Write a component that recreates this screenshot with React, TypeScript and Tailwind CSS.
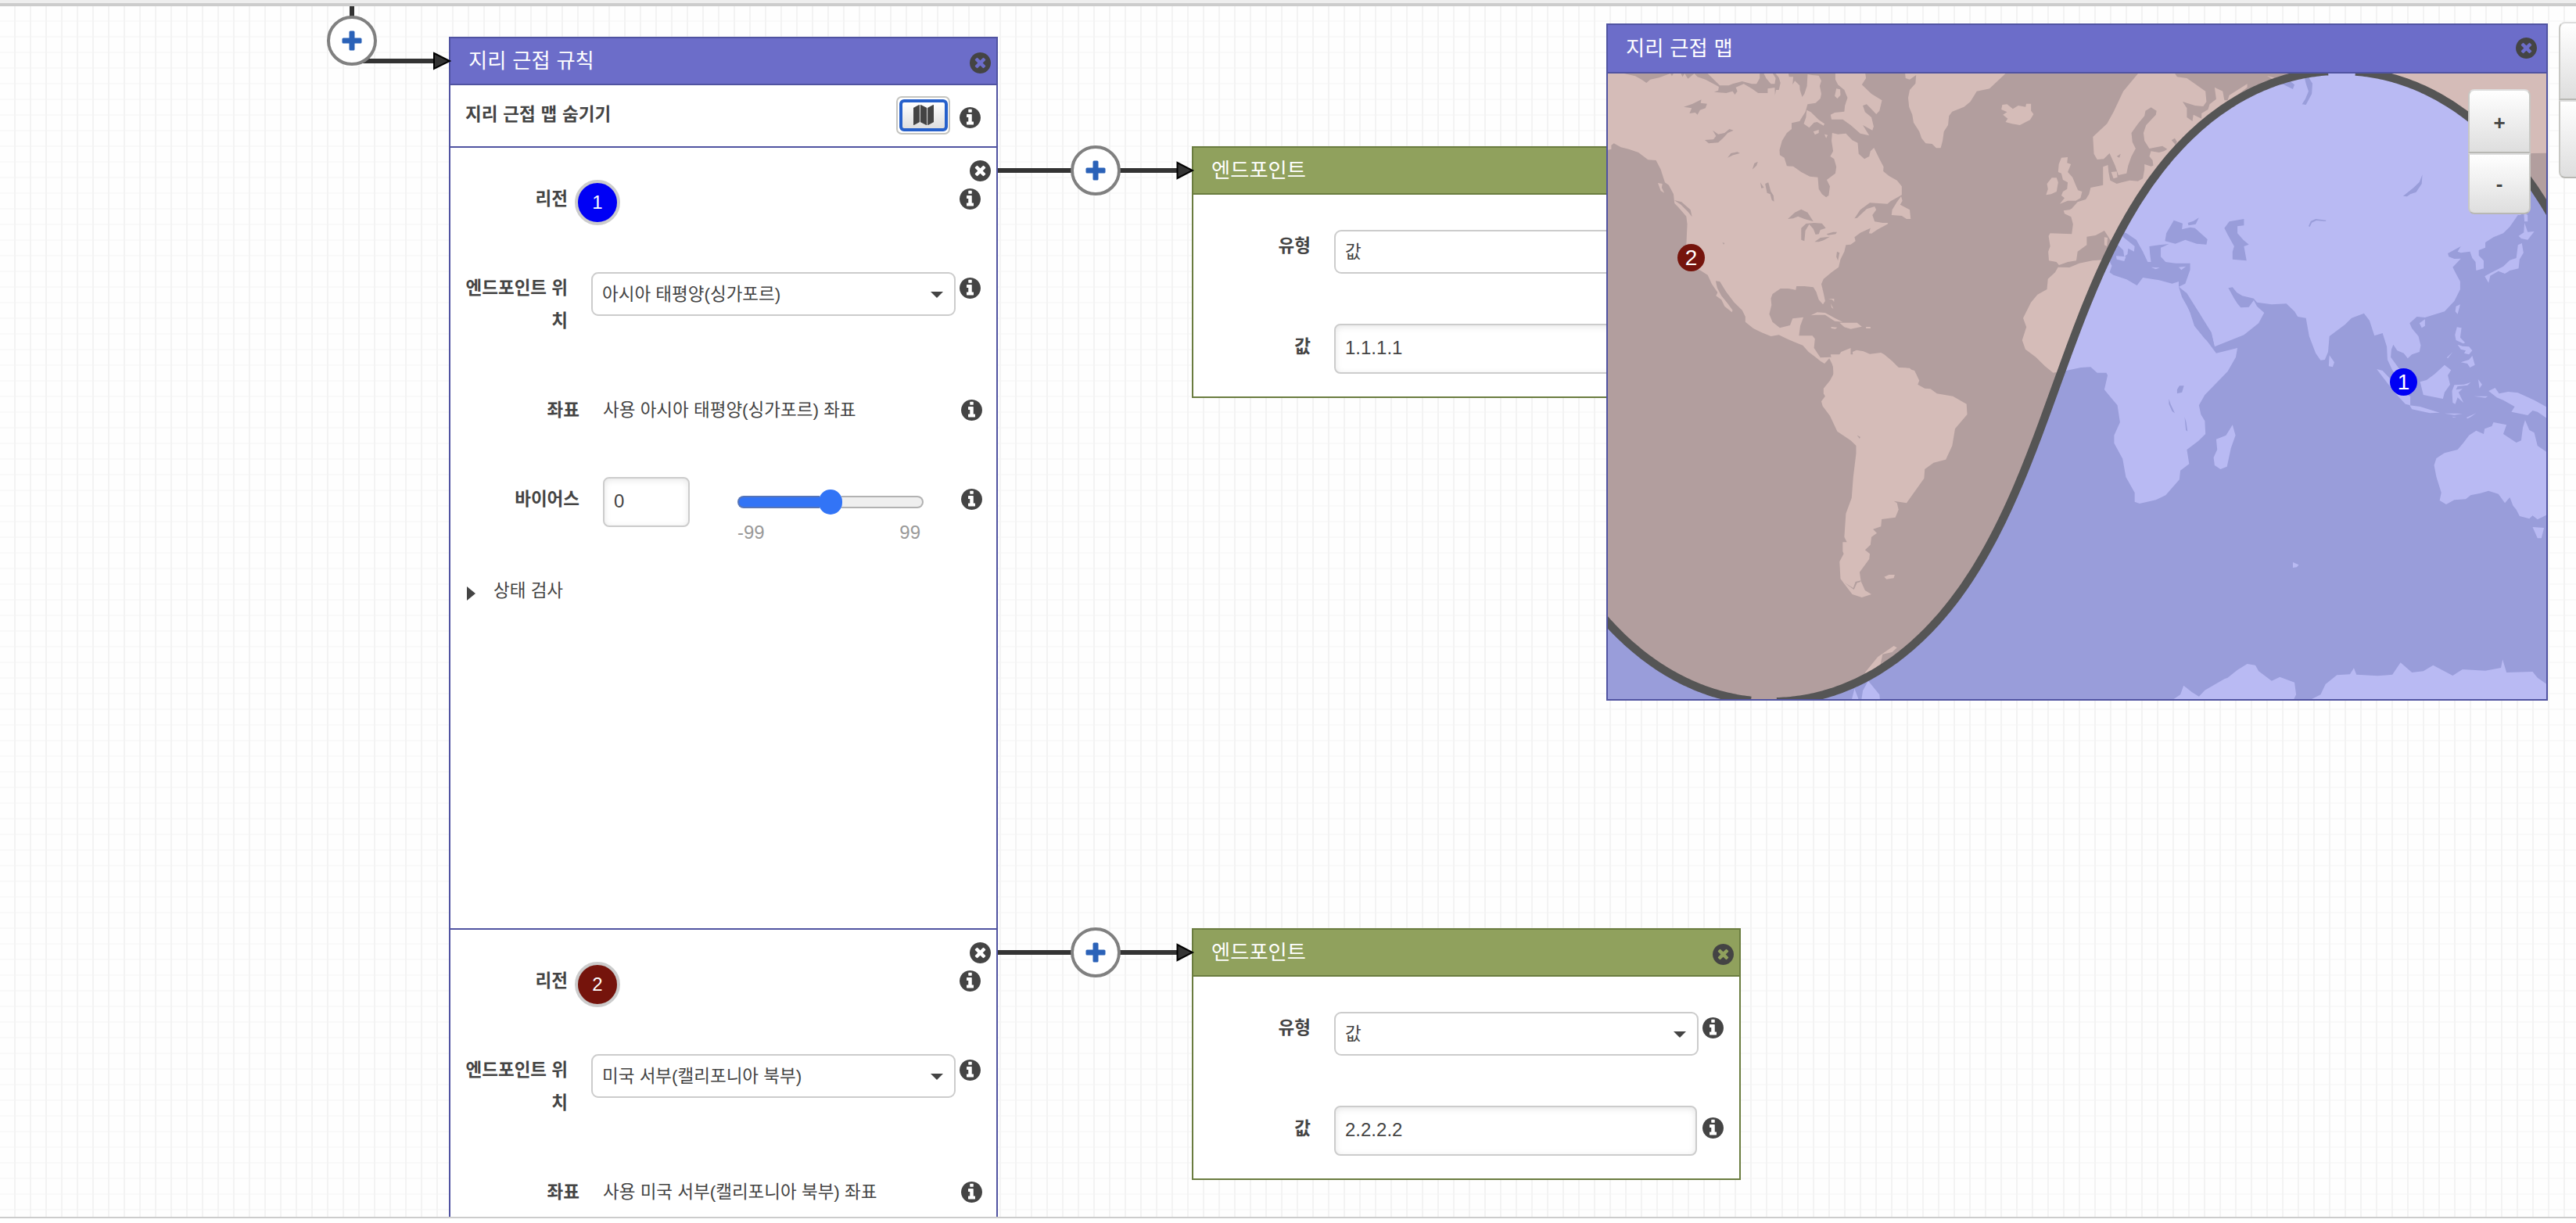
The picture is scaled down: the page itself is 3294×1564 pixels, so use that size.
import React from "react";

type Tone = "purple" | "green";

function CloseIcon() {
  return (
    <svg className="size-[27px] shrink-0 fill-[#444]" viewBox="0 128 1536 1536">
      <path d="M1149 1122q0-26-19-45L949 896l181-181q19-19 19-45 0-27-19-46l-90-90q-19-19-46-19-26 0-45 19L768 715 587 534q-19-19-45-19-27 0-46 19l-90 90q-19 19-19 46 0 26 19 45l181 181-181 181q-19 19-19 45 0 27 19 46l90 90q19 19 46 19 26 0 45-19l181-181 181 181q19 19 45 19 27 0 46-19l90-90q19-19 19-46zM1536 896q0 209-103 385.5T1153.5 1561 768 1664t-385.5-103T103 1281.5 0 896t103-385.5T382.5 231 768 128t385.5 103T1433 510.5 1536 896z" />
    </svg>
  );
}

function InfoIcon() {
  return (
    <svg className="size-[27px] shrink-0 fill-[#444]" viewBox="0 128 1536 1536">
      <path
        fillRule="evenodd"
        d="M1024 1376v-160q0-14-9-23t-23-9h-96V672q0-14-9-23t-23-9H544q-14 0-23 9t-9 23v160q0 14 9 23t23 9h96v320h-96q-14 0-23 9t-9 23v160q0 14 9 23t23 9h448q14 0 23-9t9-23zM896 480V320q0-14-9-23t-23-9H672q-14 0-23 9t-9 23v160q0 14 9 23t23 9h192q14 0 23-9t9-23zM1536 896q0 209-103 385.5T1153.5 1561 768 1664t-385.5-103T103 1281.5 0 896t103-385.5T382.5 231 768 128t385.5 103T1433 510.5 1536 896z"
      />
    </svg>
  );
}

function MapIcon() {
  return (
    <svg className="size-[26px] fill-[#444]" viewBox="0 0 1792 1792">
      <path d="M512 0q13 0 22.500 9.500T544 32v1472q0 20-17 28l-480 256q-7 4-15 4-13 0-22.500-9.500T0 1760V288q0-20 17-28L497 4q7-4 15-4zm1248 0q13 0 22.500 9.500t9.500 22.500v1472q0 20-17 28l-480 256q-7 4-15 4-13 0-22.500-9.500t-9.500-22.500V288q0-20 17-28L1745 4q7-4 15-4zM640 0q8 0 14 3l512 256q18 10 18 29v1472q0 13-9.500 22.500t-22.500 9.500q-8 0-14-3l-512-256q-18-10-18-29V32q0-13 9.500-22.500T640 0z" />
    </svg>
  );
}

function Header({ title, tone }: { title: string; tone: Tone }) {
  return (
    <div
      className={
        tone === "purple"
          ? "flex h-[60px] shrink-0 items-center justify-between border-b-2 border-[#5053a1] bg-[#6c6dc9] pr-[7px] pl-[23px]"
          : "flex h-[60px] shrink-0 items-center justify-between border-b-2 border-[#6a7c3f] bg-[#90a15d] pr-[7px] pl-[23px]"
      }
    >
      <span className="text-[26.3px] leading-[40px] text-white [word-spacing:0.5px]">{title}</span>
      <span className="mt-[4px]">
        <CloseIcon />
      </span>
    </div>
  );
}

function Select({ value }: { value: string }) {
  return (
    <div className="flex h-[56px] w-[466px] shrink-0 items-center justify-between rounded-[9px] border-2 border-[#ccc] bg-white pr-[14px] pl-[12px]">
      <span className="mt-[2px] text-[22.5px] leading-[42px]">{value}</span>
      <span className="mt-[2px] h-0 w-0 border-x-[8px] border-t-[8px] border-x-transparent border-t-[#444]" />
    </div>
  );
}

function TextBox({ value, wide }: { value: string; wide?: boolean }) {
  return (
    <div
      className={
        wide
          ? "flex h-[64px] w-[464px] shrink-0 items-center rounded-[8px] border-2 border-[#ccc] bg-white pb-[2px] pl-[12px] text-[24px] shadow-[inset_0_2px_8px_rgba(0,0,0,0.1)]"
          : "flex h-[64px] w-[111px] shrink-0 items-center rounded-[8px] border-2 border-[#ccc] bg-white pb-[2px] pl-[12px] text-[24px] shadow-[inset_0_2px_8px_rgba(0,0,0,0.1)]"
      }
    >
      {value}
    </div>
  );
}

function Label({ children }: { children: React.ReactNode }) {
  return <div className="text-right text-[22.5px] leading-[42px] font-bold">{children}</div>;
}

function BiasRow() {
  return (
    <div className="flex h-[125px] items-start pr-[18px]">
      <div className="mt-[8px] w-[165px]">
        <Label>바이어스</Label>
      </div>
      <div className="ml-[30px]">
        <TextBox value="0" />
      </div>
      <div className="mt-[16px] ml-[61px] flex w-[238px] flex-col">
        <div className="flex h-[32px] items-center">
          <div className="h-[16px] w-[105px] rounded-l-full border-2 border-r-0 border-[#5675b8] bg-[#3274f6]" />
          <div className="z-10 -mx-[1px] h-[32px] w-[30px] rounded-full bg-[#3274f6]" />
          <div className="h-[16px] flex-1 rounded-r-full border-2 border-l-0 border-[#b2b2b2] bg-[#efefef]" />
        </div>
        <div className="mt-[5px] flex justify-between pr-[4px] text-[24px] leading-[36px] text-[#999]">
          <span>-99</span>
          <span>99</span>
        </div>
      </div>
      <div className="mt-[15px] ml-auto">
        <InfoIcon />
      </div>
    </div>
  );
}

function Region({ index, place, children }: { index: 1 | 2; place: string; children?: React.ReactNode }) {
  return (
    <section className="relative h-[1000px] shrink-0 border-b-2 border-[#5053a1] pt-[41px]">
      <div className="absolute top-[16px] right-[7px]">
        <CloseIcon />
      </div>
      <div className="flex h-[118px] items-start pr-[20px]">
        <div className="mt-[4px] w-[150px]">
          <Label>리전</Label>
        </div>
        <div
          className={
            index === 1
              ? "ml-[9px] flex size-[58px] items-center justify-center rounded-full border-4 border-[#ccc] bg-[#0000f5] text-[24px] text-white"
              : "ml-[9px] flex size-[58px] items-center justify-center rounded-full border-4 border-[#ccc] bg-[#75140c] text-[24px] text-white"
          }
        >
          {index}
        </div>
        <div className="mt-[11px] ml-auto">
          <InfoIcon />
        </div>
      </div>
      <div className="flex h-[156px] items-start pr-[20px]">
        <div className="w-[150px] shrink-0">
          <Label>
            엔드포인트 위
            <br />치
          </Label>
        </div>
        <div className="ml-[30px]">
          <Select value={place} />
        </div>
        <div className="mt-[7px] ml-auto">
          <InfoIcon />
        </div>
      </div>
      <div className="flex h-[106px] items-start pr-[18px]">
        <div className="w-[165px]">
          <Label>좌표</Label>
        </div>
        <div className="ml-[30px] text-[22.5px] leading-[42px]">사용 {place} 좌표</div>
        <div className="mt-[7px] ml-auto">
          <InfoIcon />
        </div>
      </div>
      {children}
    </section>
  );
}

function Endpoint({ value }: { value: string }) {
  return (
    <div className="h-[322px] w-[702px] border-2 border-[#6a7c3f] bg-white">
      <Header title="엔드포인트" tone="green" />
      <div className="flex h-[120px] items-start pt-[45px] pr-[20px]">
        <div className="w-[150px]">
          <Label>유형</Label>
        </div>
        <div className="ml-[30px]">
          <Select value="값" />
        </div>
        <div className="mt-[7px] ml-auto">
          <InfoIcon />
        </div>
      </div>
      <div className="flex items-start pt-[45px] pr-[20px]">
        <div className="mt-[9px] w-[150px]">
          <Label>값</Label>
        </div>
        <div className="ml-[30px]">
          <TextBox value={value} wide />
        </div>
        <div className="mt-[15px] ml-auto">
          <InfoIcon />
        </div>
      </div>
    </div>
  );
}

function RuleNode() {
  return (
    <div className="flex h-[1509px] w-[702px] flex-col overflow-hidden border-2 border-b-0 border-[#5053a1] bg-white">
      <Header title="지리 근접 규칙" tone="purple" />
      <div className="flex h-[80px] shrink-0 items-center border-b-2 border-[#5053a1] pr-[20px] pl-[19px]">
        <span className="-mt-[2px] text-[22.5px] leading-[42px] font-bold [word-spacing:0.6px]">지리 근접 맵 숨기기</span>
        <div className="-mt-[2px] ml-auto flex h-[49px] w-[69px] items-center justify-center rounded-[7px] border-2 border-[#c4c4c0] bg-white">
          <div className="flex h-[41px] w-[62px] items-center justify-center rounded-[6px] border-4 border-[#2660cb] bg-linear-to-b from-white to-[#dedede]">
            <MapIcon />
          </div>
        </div>
        <span className="mt-[5px] ml-[12px]">
          <InfoIcon />
        </span>
      </div>
      <Region index={1} place="아시아 태평양(싱가포르)">
        <BiasRow />
        <div className="flex items-center pl-[21px]">
          <span className="mt-[5px] h-0 w-0 border-y-[9px] border-l-[11px] border-y-transparent border-l-[#444]" />
          <span className="ml-[23px] text-[22.5px] leading-[42px]">상태 검사</span>
        </div>
      </Region>
      <Region index={2} place="미국 서부(캘리포니아 북부)" />
    </div>
  );
}

function PlusNode() {
  return (
    <div className="flex size-[64px] items-center justify-center rounded-full border-4 border-[#808080] bg-white">
      <svg className="size-[26px]" viewBox="0 0 26 26">
        <path d="M13 2V24M2 13H24" stroke="#2b62b8" strokeWidth="5.500" />
        <path d="M13 2.500V23.500M2.500 13H23.500" stroke="#2b62b8" strokeWidth="5" strokeLinejoin="round" />
        <rect x="9.500" y="0.500" width="7" height="25" rx="1.500" fill="#2b62b8" />
        <rect x="0.500" y="9.500" width="25" height="7" rx="1.500" fill="#2b62b8" />
      </svg>
    </div>
  );
}

function Edge() {
  return (
    <div className="relative flex h-[64px] w-[251px] items-center">
      <svg className="absolute inset-0 size-full" viewBox="0 0 251 64">
        <path d="M0 32H232" stroke="#333" strokeWidth="6" />
        <path d="M229.500 22L249 32L229.500 42Z" fill="#333" stroke="#000" strokeWidth="2" />
      </svg>
      <div className="relative ml-[93px]">
        <PlusNode />
      </div>
    </div>
  );
}

// Great circle separating the two regions, in Mercator pixels.
const SCALE = 231.4;
const EQUATOR = 494;
const CREST = 2992.5;
const STEEPNESS = 2.77;

function front(from: number, to: number) {
  const pts: string[] = [];
  for (let x = from; x <= to; x += 3) {
    const y = EQUATOR - SCALE * Math.asinh(STEEPNESS * Math.cos((x - CREST) / SCALE));
    pts.push(`${x} ${y.toFixed(2)}`);
  }
  return `M${pts.join("L")}`;
}

const FRONTS = [front(2050, 2240), front(2272, 2979), front(3012, 3262)];
const BLUE_ZONE = `${front(2047, 3262)}L3262 910L2047 910Z`;

const NORTHWEST = [
  // North America and the isthmus
  "M30 200L90 222L125 232 145 245 160 258 172 245 200 238 235 222 240 232 245 222 268 222 273 235 280 222 290 242 310 222 320 235 345 245 375 265 387 273 385 287 372 293 410 297 430 290 437 303 445 290 440 275 465 262 490 280 510 297 540 297 540 280 562 276 563 305 566 285 575 285 580 258 575 238 560 215 604 215 607 235 620 235 618 265 625 250 640 268 641 285 648 312 655 300 663 270 665 225 680 228 700 230 708 250 703 270 708 300 705 318 690 335 665 340 658 370 650 385 640 405 615 412 615 435 600 450 585 480 577 515 578 535 592 545 600 577 620 578 645 600 672 617 697 620 700 665 710 685 723 697 731 690 735 655 725 630 752 605 755 580 748 550 736 540 745 520 740 480 742 450 760 455 785 452 805 478 822 488 825 530 843 550 858 540 862 520 873 507 890 550 903 580 902 597 920 615 945 632 960 655 960 688 925 712 915 722 860 718 830 745 812 778 820 776 850 742 875 732 880 745 868 765 875 790 900 795 917 795 915 800 885 820 865 836 857 835 862 815 830 833 812 850 815 865 800 878 785 880 780 905 768 935 762 965 740 985 715 1010 708 1030 715 1065 720 1095 713 1108 700 1090 692 1060 683 1042 655 1038 630 1038 628 1052 605 1047 580 1047 555 1068 550 1085 552 1110 545 1145 555 1175 578 1198 610 1188 618 1162 652 1157 642 1190 638 1228 680 1228 688 1240 685 1275 705 1312 735 1310 750 1313 765 1300 770 1290 800 1275 800 1300 807 1308 806 1290 818 1283 840 1288 860 1298 895 1293 905 1300 930 1325 950 1350 985 1352 1007 1380 1007 1400 746 1400 745 1345 733 1315 718 1335 705 1325 690 1310 668 1290 650 1265 620 1250 600 1240 575 1225 550 1230 520 1215 495 1200 470 1175 470 1155 460 1130 435 1100 410 1060 390 1020 377 1018 382 1045 395 1075 415 1105 430 1130 428 1138 405 1115 395 1090 378 1075 383 1062 365 1030 352 995 330 978 300 960 290 940 285 880 288 800 285 770 260 735 248 720 245 685 230 650 218 640 210 610 205 590 190 555 165 553 135 525 105 512 80 505 58 490 50 497 50 512 30 518Z",
  "M352 222L515 222 515 240 505 262 490 262 460 252 430 262 418 268 390 268 375 250Z",
  "M528 222L556 222 565 240 562 262 550 262 535 240Z",
  "M752 215L845 215 848 240 835 265 865 300 898 325 890 365 880 378 862 355 850 340 838 345 845 370 865 390 872 425 868 440 838 420 858 460 830 452 800 420 775 398 740 398 737 380 750 372 780 368 782 345 790 315 780 285 760 265 752 245Z",
  "M755 280L767 283 768 305 758 318 750 308Z",
  "M662 362L675 370 700 400 718 415 715 422 695 408 685 410 670 430 653 415 660 390Z",
  "M683 445L700 438 700 450 688 457ZM718 455L728 458 723 470Z",
  "M970 215L1285 222 1265 245 1235 280 1195 290 1175 330 1155 350 1118 368 1108 385 1105 420 1092 445 1088 480 1082 508 1068 508 1055 492 1035 490 1022 470 1015 445 997 410 993 380 983 350 980 315 985 285 1003 260 1005 228 985 245 972 240Z",
  "M1275 342L1290 340 1308 358 1325 345 1348 350 1350 338 1365 338 1365 365 1373 378 1362 400 1330 420 1305 415 1285 408 1292 395 1277 380 1290 370 1272 360Z",
  "M1460 545L1480 543 1478 565 1490 570 1480 600 1495 620 1505 650 1512 670 1525 675 1520 700 1505 710 1480 710 1455 722 1470 700 1460 690 1465 675 1478 665 1480 640 1465 630 1460 605 1450 600 1452 570Z",
  "M1430 622L1445 622 1450 640 1445 675 1428 685 1412 688 1418 665 1415 645Z",
  "M958 693L962 710 955 725 985 745 988 780 975 780 960 768 928 765 930 745 945 715Z",
  "M675 1150L695 1138 720 1140 750 1160 775 1175 750 1172 720 1148 690 1148Z",
  "M765 1178L820 1178 835 1193 800 1202 780 1195Z",
  "M738 1194L758 1196 752 1202 740 1200ZM848 1194H862V1200H848Z",
  "M730 1087L748 1086 748 1098 742 1090ZM738 1105L746 1125 740 1120Z",
  "M196 642L210 645 208 660 216 680 205 672Z",
];

const NORTHWEST_LAKES = [
  "M277 350L305 338 332 322 330 335 350 338 345 355 328 362 320 380 313 372 295 375 302 355Z",
  "M368 440L385 455 405 450 420 435 433 440 415 450 400 470 385 487 355 490 343 477 370 475 378 462Z",
  "M414 545L425 528 445 523 453 528 432 535Z",
  "M492 590L498 567 509 560 505 575Z",
  "M517 640L528 660 520 662ZM532 645L542 640 550 675 558 690 560 713 553 708 548 685 538 680Z",
  "M603 780L625 755 645 743 665 755 683 790 655 780 635 770 620 778Z",
  "M645 815L660 798 685 795 710 797 722 815 705 822 700 838 690 840 683 818 670 800 658 825 655 865 645 860Z",
  "M687 868L705 852 735 848 715 862 700 868ZM724 838L745 830 757 830 753 838 730 842Z",
  "M247 708L270 715 298 745 303 772 290 752 268 725Z",
  "M398 870L405 873 402 878Z",
  "M757 905L765 910 760 940 755 925Z",
];

const NORTHEAST = [
  // Eurasia with Arabia and Indochina
  "M-3 748L15 745 22 740 40 715 65 705 75 685 80 660 118 650 118 580 133 573 135 600 140 632 160 645 175 640 200 632 225 635 240 625 245 590 245 570 265 578 272 575 270 555 260 540 265 520 290 525 305 520 315 512 300 500 260 510 245 480 242 450 250 420 280 380 282 365 265 352 248 365 245 385 225 415 205 450 208 485 218 510 205 540 195 575 190 605 165 612 155 575 138 528 120 550 100 552 90 530 87 465 130 415 150 370 180 290 230 215 335 215 345 235 375 240 400 262 432 290 435 330 425 348 400 345 362 330 375 355 375 390 392 405 395 380 420 395 420 375 440 360 445 340 465 320 460 275 485 290 490 325 500 325 505 305 560 262 560 275 525 310 600 290 640 245 620 230 640 238 665 260 700 282 705 265 690 250 735 235 740 260 748 290 738 320 728 340 740 342 758 300 760 260 750 240 755 210 1500 210 1500 527 1430 528 1425 560 1370 700 1400 765 1390 765 1365 810 1345 835 1315 850 1290 870 1290 890 1270 900 1270 920 1285 940 1285 970 1262 978 1260 945 1250 930 1243 905 1215 910 1205 905 1215 885 1175 912 1178 925 1195 933 1215 932 1190 965 1200 990 1213 1020 1213 1050 1195 1095 1165 1135 1130 1148 1105 1158 1080 1155 1058 1180 1065 1200 1085 1230 1092 1265 1088 1290 1065 1300 1052 1315 1040 1295 1020 1285 1008 1262 1002 1280 1000 1310 1020 1345 1035 1370 1020 1390 1005 1360 990 1320 988 1270 975 1218 950 1228 935 1170 918 1142 880 1160 860 1185 812 1230 808 1290 798 1320 785 1322 770 1295 750 1230 740 1160 715 1155 705 1135 680 1105 635 1108 590 1100 580 1085 545 1075 528 1062 515 1042 502 1045 520 1085 530 1105 540 1120 565 1118 580 1092 590 1115 612 1140 595 1180 550 1225 460 1270 450 1215 410 1135 375 1065 350 1040 370 1028 385 975 385 950 340 950 310 945 295 925 295 890 305 885 320 876 290 880 260 885 262 915 265 945 255 945 240 905 220 860 190 835 178 830 180 850 215 885 213 905 195 893 193 915 183 925 180 900 160 875 140 860 130 840 122 825 95 843 68 848 68 880 40 905 36 940 10 945 -17 957 -25 945 -48 940 -50 905 -44 885 -49 845 -44 835 22 838 26 800 20 772 0 760Z",
  "M143 600L160 598 162 620 150 625Z",
  "M158 922L188 925 183 942 160 935ZM122 850L132 852 130 885 122 880Z",
  "M265 965L292 967 280 973ZM350 965L372 962 358 976Z",
  // Africa
  "M-20 965L15 966 45 950 85 940 135 935 145 960 138 985 150 995 190 1012 222 1035 240 1005 290 1015 330 1028 350 1020 350 1040 360 1080 385 1135 400 1190 435 1245 465 1295 530 1275 525 1310 500 1365 430 1455 412 1495 418 1530 430 1555 432 1605 410 1632 375 1665 382 1720 355 1745 352 1780 310 1840 280 1858 230 1872 215 1865 215 1830 188 1770 178 1700 152 1640 152 1610 170 1560 162 1495 122 1435 132 1380 128 1370 100 1370 80 1348 50 1350 5 1362 -35 1370 -60 1345 -88 1310 -120 1280 -130 1245 -117 1195 -127 1160 -103 1100 -83 1070 -54 1050 -51 1010 -29 985Z",
  "M1390 880L1402 873 1407 910 1395 935 1392 970 1365 978 1350 990 1330 980 1305 998 1300 1025 1288 1000 1310 985 1345 962 1365 938 1385 930Z",
  "M1392 845L1408 832 1410 795 1420 830 1440 828 1420 860 1400 855Z",
  "M1408 755L1420 765 1420 790 1410 790Z",
  "M1200 1115L1213 1108 1205 1145 1198 1135ZM1088 1180L1105 1165 1105 1190 1095 1198Z",
  "M1203 1195L1217 1198 1213 1235 1228 1255 1222 1258 1200 1245 1197 1225Z",
  "M1205 1262L1220 1268 1240 1270 1250 1285 1240 1300 1225 1295 1230 1285 1215 1280Z",
  "M1190 1290L1175 1315 1172 1312ZM1215 1330L1240 1320 1250 1305 1258 1340 1243 1350 1235 1335Z",
  "M812 1303L827 1330 822 1348 810 1345Z",
];

const NORTHEAST_LAKES = [
  "M550 780L550 805 530 808 530 835 548 860 565 878 550 885 558 940 515 935 515 905 520 885 500 840 490 815 505 790Z",
  "M335 785L362 797 360 820 385 812 400 815 438 858 435 878 405 875 370 860 340 875 308 865 312 835Z",
  "M378 795L395 788 412 775 402 800 380 805Z",
  "M748 808L755 788 770 780 802 785 800 789 772 786 758 794 752 810Z",
  "M1097 610L1095 645 1078 677 1060 685 1050 694 1038 692 1070 660 1088 638Z",
  "M352 1045L372 1065 378 1085 415 1145 425 1180 450 1218 460 1272 430 1240 398 1190 385 1140Z",
  "M328 478L338 470 345 485 340 495ZM160 540L172 530 168 545Z",
  "M345 1435L352 1420 366 1420 360 1445 345 1450Z",
  "M320 1470L325 1490 338 1525 330 1518 320 1490ZM368 1540L373 1560 377 1595 372 1590Z",
];

const SOUTHWEST = [
  "M737 -20L748 50 735 80 715 110 715 130 720 140 708 160 712 178 735 215 758 275 800 310 817 330 817 360 808 450 803 530 785 590 780 680 788 700 775 700 775 735 778 745 765 775 768 840 780 860 805 900 835 912 865 900 845 885 832 850 828 815 858 765 860 745 845 730 862 710 865 680 882 665 870 650 895 640 897 612 940 605 950 575 945 550 935 542 975 550 1030 455 1032 420 1060 395 1098 383 1118 330 1127 265 1165 210 1163 170 1120 140 1070 130 1050 112 1032 110 1010 95 1015 80 1000 42 975 32 950 30 920 0 900 -20Z",
  "M905 833L920 825 938 825 935 838 912 842Z",
  "M845 1200L885 1140 935 1098 945 1105 930 1122 900 1130 893 1170 850 1207Z",
  "M855 1232L890 1285 892 1310 833 1310 838 1270ZM812 1262L827 1310 802 1310Z",
];

const SOUTHEAST = [
  "M515 250L524 290 510 340 498 410 478 420 460 405 457 375 468 345 465 305 495 290Z",
  "M1490 365L1450 330 1440 280 1425 270 1412 232 1405 260 1400 310 1385 318 1345 285 1355 250 1315 240 1310 255 1288 265 1285 285 1262 272 1240 290 1222 320 1205 345 1165 358 1140 378 1133 405 1140 450 1155 510 1150 540 1170 555 1195 538 1230 535 1245 520 1275 512 1300 503 1330 515 1350 550 1365 528 1375 560 1385 575 1395 600 1425 610 1435 598 1450 613 1490 588Z",
  "M1435 642L1470 645 1462 685 1450 685Z",
  "M957 36L975 42 1000 75 1040 130 1060 140 1060 175 1045 170 1015 130 990 90Z",
  "M1058 175L1090 180 1150 203 1120 205 1065 190Z",
  "M1165 206L1190 206 1220 207 1195 212ZM1188 218L1202 222 1192 222ZM1232 222L1262 205 1245 220 1235 226Z",
  "M1090 85L1110 78 1135 55 1165 20 1185 40 1175 60 1182 95 1165 125 1160 150 1100 135Z",
  "M1195 97L1225 95 1245 87 1235 98 1205 102 1200 115 1220 112 1208 125 1223 165 1205 145 1198 170 1190 165 1188 120Z",
  "M1268 75L1280 95 1272 110ZM1255 140L1298 140 1290 146Z",
  "M1300 120L1320 108 1332 130 1360 123 1390 127 1440 155 1490 190 1490 235 1450 200 1435 195 1420 213 1370 200 1380 180 1345 155 1325 145Z",
  "M700 777L718 787 712 796 700 798Z",
  "M325 1310L355 1285 365 1250 390 1275 412 1292 430 1268 490 1225 500 1220 530 1190 560 1167 585 1172 595 1195 635 1232 660 1217 705 1238 710 1285 700 1310Z",
  "M745 1310L785 1285 800 1245 835 1210 875 1207 887 1183 895 1208 960 1213 1005 1208 1030 1162 1065 1200 1100 1195 1130 1172 1190 1212 1220 1188 1290 1193 1338 1182 1343 1150 1355 1200 1435 1197 1450 1220 1490 1255 1490 1310Z",
];

function World({ land, ocean }: { land: string; ocean: string }) {
  return (
    <>
      <rect x="2050" y="88" width="1212" height="812" fill={ocean} />
      <g transform="translate(2040 20) scale(.40816 .33333)">
        <path d={NORTHWEST.join("")} fill={land} />
        <path d={NORTHWEST_LAKES.join("")} fill={ocean} />
      </g>
      <g transform="translate(2640 20) scale(.41709 .33333)">
        {NORTHEAST.map((d) => (
          <path key={d} d={d} fill={land} />
        ))}
        <path d={NORTHEAST_LAKES.join("")} fill={ocean} />
      </g>
      <g transform="translate(2040 460) scale(.40816 .33333)">
        <path d={SOUTHWEST.join("")} fill={land} />
        <path d="M780 855L808 876 815 852 832 847 830 853 820 856 810 882Z" fill={ocean} />
        <path d="M820 290L830 296 828 303Z" fill={ocean} />
      </g>
      <g transform="translate(2640 460) scale(.41709 .33333)">
        <path d={SOUTHEAST.join("")} fill={land} />
      </g>
    </>
  );
}

function MapPanel() {
  return (
    <div className="flex h-[866px] w-[1204px] flex-col border-2 border-[#5053a1] bg-white">
      <div className="flex h-[62px] shrink-0 items-center justify-between border-b-2 border-[#5053a1] bg-[#6c6dc9] pr-[12px] pl-[23px]">
        <span className="-mt-[1px] text-[26.3px] leading-[40px] text-white [word-spacing:0.5px]">지리 근접 맵</span>
        <span className="-mt-[2px]">
          <CloseIcon />
        </span>
      </div>
      <div className="relative h-[800px]">
        <svg className="block h-[800px] w-[1200px]" viewBox="2056 94 1200 800">
          <defs>
            <clipPath id="zone">
              <path d={BLUE_ZONE} />
            </clipPath>
          </defs>
          <World land="#d5bcb8" ocean="#b29e9e" />
          <g clipPath="url(#zone)">
            <World land="#b9baf3" ocean="#999dda" />
          </g>
          {FRONTS.map((d) => (
            <path key={d} d={d} fill="none" stroke="#555" strokeWidth="10.500" />
          ))}
        </svg>
        <div className="absolute top-[218px] left-[89px] flex size-[35px] items-center justify-center rounded-full bg-[#75140c] text-[28px] leading-none text-white">
          2
        </div>
        <div className="absolute top-[377px] left-[1000px] flex size-[35px] items-center justify-center rounded-full bg-[#0000f5] text-[28px] leading-none text-white">
          1
        </div>
        <div className="absolute top-[20px] right-[20px] flex h-[160px] w-[80px] flex-col text-[26px] font-bold">
          <div className="flex flex-1 items-center justify-center rounded-t-[8px] border-2 border-t-[#ddd] border-r-[#c8c8c4] border-b-[#b8b8b4] border-l-[#c8c8c4] bg-linear-to-b from-white to-[#dedede] pt-[4px]">
            +
          </div>
          <div className="flex flex-1 items-center justify-center rounded-b-[8px] border-2 border-t-[#ddd] border-r-[#c8c8c4] border-b-[#b8b8b4] border-l-[#c8c8c4] bg-linear-to-b from-white to-[#dedede]">
            -
          </div>
        </div>
      </div>
    </div>
  );
}

export default function App() {
  return (
    <div className="flex h-[1564px] w-[3294px] flex-col overflow-hidden bg-white font-['Liberation_Sans','Noto_Sans_CJK_KR',sans-serif] text-[#444]">
      <div className="h-[8px] shrink-0 border-b-4 border-[#ccc] bg-[#eee]" />
      <main className="relative h-[1548px] shrink-0 overflow-hidden bg-[#fefefe] bg-[linear-gradient(to_right,transparent_18px,#f3f3f3_18px),linear-gradient(to_bottom,transparent_18px,#f9f9f9_18px)] bg-[size:20px_20px]">
        <div className="absolute top-[39px] left-[574px]">
          <RuleNode />
        </div>
        <svg className="absolute top-0 left-[440px] h-[90px] w-[140px]" viewBox="0 0 140 90">
          <path d="M10 0V70H116" fill="none" stroke="#333" strokeWidth="6" />
          <path d="M115 60L135 70L115 80Z" fill="#333" stroke="#000" strokeWidth="2" />
        </svg>
        <div className="absolute top-[12px] left-[418px]">
          <PlusNode />
        </div>
        <div className="absolute top-[179px] left-[1524px]">
          <Endpoint value="1.1.1.1" />
        </div>
        <div className="absolute top-[178px] left-[1276px]">
          <Edge />
        </div>
        <div className="absolute top-[1179px] left-[1524px]">
          <Endpoint value="2.2.2.2" />
        </div>
        <div className="absolute top-[1178px] left-[1276px]">
          <Edge />
        </div>
        <div className="absolute top-[22px] left-[2054px]">
          <MapPanel />
        </div>
        <div className="absolute top-[20px] left-[3272px] flex h-[200px] w-[80px] flex-col">
          <div className="flex-1 rounded-t-[8px] border-2 border-t-[#ddd] border-b-[#b8b8b4] border-l-[#c8c8c4] bg-linear-to-b from-white to-[#dedede]" />
          <div className="flex-1 rounded-b-[8px] border-2 border-t-[#ddd] border-b-[#b8b8b4] border-l-[#c8c8c4] bg-linear-to-b from-white to-[#dedede]" />
        </div>
      </main>
      <div className="h-[2px] shrink-0 bg-[#ccc]" />
    </div>
  );
}
